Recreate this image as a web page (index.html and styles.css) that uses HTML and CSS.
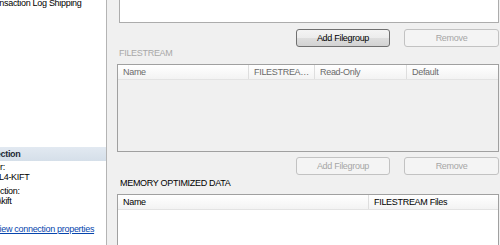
FILE: index.html
```html
<!DOCTYPE html>
<html>
<head>
<meta charset="utf-8">
<link rel="stylesheet" href="styles.css">
</head>
<body>
<div class="left">
  <div class="item">Transaction Log Shipping</div>
  <div class="sect">Connection</div>
  <div class="lbl lbl-server">Server:</div>
  <div class="val">L4-KIFT</div>
  <div class="lbl lbl-conn">Connection:</div>
  <div class="val">\kift</div>
  <a class="link" href="#">View connection properties</a>
</div>
<div class="right">
  <div class="toplist"></div>
  <div class="btnrow">
    <button class="btn">Add Filegroup</button>
    <button class="btn btn-wide" disabled>Remove</button>
  </div>
  <div class="label disabled">FILESTREAM</div>
  <div class="grid fs">
    <div class="ghead">
      <div class="gcol c-name">Name</div>
      <div class="gcol c-fs">FILESTREAM Files</div>
      <div class="gcol c-ro">Read-Only</div>
      <div class="gcol c-last">Default</div>
    </div>
  </div>
  <div class="btnrow btnrow2">
    <button class="btn" disabled>Add Filegroup</button>
    <button class="btn btn-wide" disabled>Remove</button>
  </div>
  <div class="label label-mem">MEMORY OPTIMIZED DATA</div>
  <div class="grid mem">
    <div class="ghead">
      <div class="gcol c-mname">Name</div>
      <div class="gcol c-last">FILESTREAM Files</div>
    </div>
  </div>
</div>
</body>
</html>
```

FILE: styles.css
```css
html, body {
  margin: 0;
  padding: 0;
}
body {
  width: 500px;
  height: 245px;
  overflow: hidden;
  display: flex;
  font-family: "Liberation Sans", Arial, sans-serif;
  font-size: 9px;
  letter-spacing: -0.3px;
  color: #000;
}
.left {
  width: 106px;
  flex: none;
  background: #fff;
  border-right: 1px solid #b4b4b4;
  overflow: hidden;
  display: flex;
  flex-direction: column;
}
.item {
  margin-top: -3px;
  line-height: 12px;
  height: 12px;
  white-space: nowrap;
  text-indent: -13px;
}
.sect {
  margin-top: 138px;
  height: 14px;
  line-height: 14px;
  background: linear-gradient(#e2e9f1, #d5dfe9);
  font-weight: bold;
  color: #1e2a36;
  white-space: nowrap;
  text-indent: -26px;
}
.lbl, .val {
  line-height: 10px;
  height: 10px;
  white-space: nowrap;
}
.lbl-server {
  margin-top: 1px;
  text-indent: -22px;
}
.lbl-conn {
  margin-top: 4px;
  text-indent: -25px;
}
.val {
  text-indent: -1px;
}
.link {
  margin-top: 17px;
  line-height: 12px;
  white-space: nowrap;
  text-indent: -6px;
  color: #0645ad;
  text-decoration: underline;
}
.right {
  flex: 1;
  min-width: 0;
  background: #f0f0f0;
  padding: 0 1px 0 10px;
  display: flex;
  flex-direction: column;
  overflow: hidden;
}
.toplist {
  flex: none;
  margin-left: 2px;
  height: 22px;
  background: #fff;
  border: 1px solid #acacac;
  border-top: 0;
}
.btnrow {
  flex: none;
  display: flex;
  justify-content: flex-end;
  gap: 14px;
  margin-top: 6px;
}
.btnrow2 {
  margin-top: 5px;
}
.btn {
  box-sizing: border-box;
  width: 94px;
  height: 18px;
  margin: 0;
  padding: 0;
  border: 1px solid #707070;
  border-radius: 3px;
  background: linear-gradient(#f4f4f4 0%, #ececec 50%, #dedede 51%, #d2d2d2 100%);
  font-family: inherit;
  font-size: 9px;
  letter-spacing: -0.3px;
  color: #000;
}
.btn-wide {
  width: 95px;
}
.btn:disabled {
  border-color: #c2c2c2;
  background: #f4f4f4;
  color: #a6a6a6;
}
.label {
  flex: none;
  height: 12px;
  line-height: 12px;
  padding-left: 2px;
  white-space: nowrap;
}
.label-mem {
  margin-top: 2px;
  padding-left: 3px;
}
.disabled {
  color: #a8a8a8;
}
.grid {
  flex: none;
  margin-top: 5px;
  border: 1px solid #a0a0a0;
  box-sizing: border-box;
}
.fs {
  height: 88px;
  background: #f0f0f0;
}
.mem {
  height: 120px;
  background: #fff;
}
.ghead {
  display: flex;
  height: 15px;
  box-sizing: border-box;
  line-height: 14px;
  background: linear-gradient(#ffffff, #f3f3f3);
  border-bottom: 1px solid #e3e3e3;
}
.fs .ghead {
  color: #6a6a6a;
}
.gcol {
  box-sizing: border-box;
  padding-left: 5px;
  padding-right: 3px;
  border-right: 1px solid #dedede;
  white-space: nowrap;
  overflow: hidden;
  text-overflow: ellipsis;
  flex: none;
}
.c-name { width: 131px; }
.c-fs { width: 66px; }
.c-ro { width: 92px; }
.c-mname { width: 251px; }
.c-last {
  flex: 1;
  border-right: 0;
}
```
